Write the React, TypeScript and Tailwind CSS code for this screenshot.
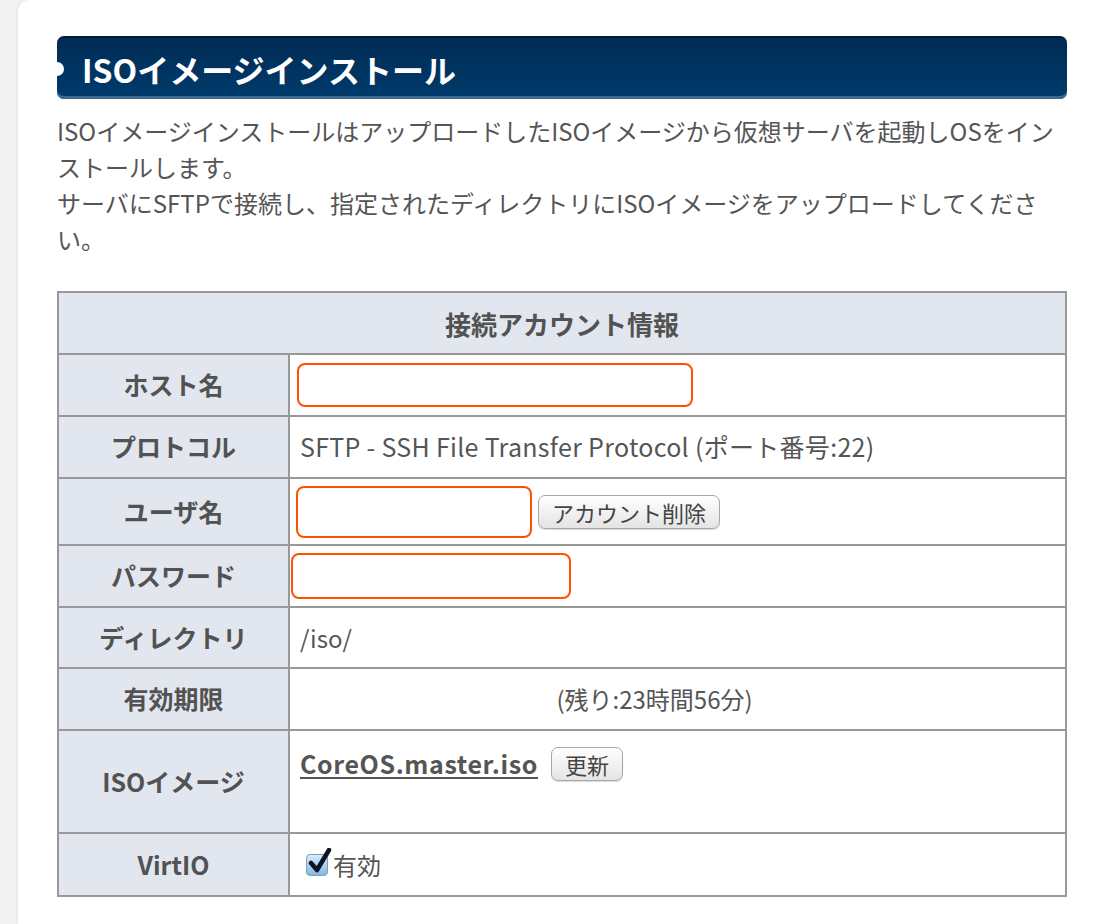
import { useState } from 'react';

const font = { fontFamily: '"Noto Sans CJK JP", "Noto Sans", sans-serif' };

function Label({ children }: { children: React.ReactNode }) {
  return (
    <td className="w-[231px] border-2 border-[#999] bg-[#e2e7ef] text-center align-middle text-[25px] font-bold text-[#525252]">
      {children}
    </td>
  );
}

function MacButton({ children }: { children: React.ReactNode }) {
  return (
    <button className="h-[34px] rounded-[7px] border border-[#a8a8a8] bg-gradient-to-b from-white to-[#e4e4e4] px-[13px] text-[22px] leading-none text-[#444] shadow-[0_1px_1px_rgba(0,0,0,0.15)]">
      {children}
    </button>
  );
}

export default function App() {
  const [host, setHost] = useState('');
  const [user, setUser] = useState('');
  const [pass, setPass] = useState('');
  const [virtio, setVirtio] = useState(true);

  return (
    <div className="min-h-[924px] bg-[#f3f3f3] pl-[18px]" style={font}>
      <div className="min-h-[924px] rounded-tl-[10px] bg-white pl-[39px] pr-[30px] pt-[36px] shadow-[0_0_4px_rgba(0,0,0,0.12)]">
        {/* Title bar */}
        <div className="relative flex h-[63px] w-[1010px] items-center rounded-[7px] border-t-2 border-[#001d38] bg-gradient-to-b from-[#002c55] to-[#003b6c] pl-[25px] shadow-[inset_0_-3px_0_#3d6a8e]">
          <span className="absolute left-[-7px] top-1/2 h-[14px] w-[14px] -translate-y-1/2 rounded-full bg-white" />
          <h1 className="text-[32px] font-bold leading-none text-white">ISOイメージインストール</h1>
        </div>

        {/* Description */}
        <p className="mt-[14px] whitespace-nowrap text-[24px] leading-[36px] text-[#555]">
          ISOイメージインストールはアップロードしたISOイメージから仮想サーバを起動しOSをイン
          <br />
          ストールします。
          <br />
          サーバにSFTPで接続し、指定されたディレクトリにISOイメージをアップロードしてくださ
          <br />
          い。
        </p>

        {/* Account table */}
        <table className="mt-[34px] w-[1010px] border-collapse border-2 border-[#999] text-[24px] text-[#555]">
          <tbody>
            <tr className="h-[62px]">
              <th colSpan={2} className="border-2 border-[#999] bg-[#e2e7ef] text-center text-[26px] font-bold text-[#525252]">
                接続アカウント情報
              </th>
            </tr>
            <tr className="h-[62px]">
              <Label>ホスト名</Label>
              <td className="border-2 border-[#999] px-[7px]">
                <input
                  value={host}
                  onChange={e => setHost(e.target.value)}
                  className="block h-[44px] w-[396px] rounded-[8px] border-2 border-[#ff5200] px-2 outline-none"
                />
              </td>
            </tr>
            <tr className="h-[62px]">
              <Label>プロトコル</Label>
              <td className="border-2 border-[#999] px-[10px] text-[25px] tracking-[0.3px]">SFTP - SSH File Transfer Protocol (ポート番号:22)</td>
            </tr>
            <tr className="h-[67px]">
              <Label>ユーザ名</Label>
              <td className="border-2 border-[#999] px-[6px]">
                <div className="flex items-center gap-[6px]">
                  <input
                    value={user}
                    onChange={e => setUser(e.target.value)}
                    className="block h-[52px] w-[236px] rounded-[8px] border-2 border-[#ff5200] px-2 outline-none"
                  />
                  <MacButton>アカウント削除</MacButton>
                </div>
              </td>
            </tr>
            <tr className="h-[62px]">
              <Label>パスワード</Label>
              <td className="border-2 border-[#999] pl-[1px]">
                <input
                  type="password"
                  value={pass}
                  onChange={e => setPass(e.target.value)}
                  className="block h-[46px] w-[280px] rounded-[8px] border-2 border-[#ff5200] px-2 outline-none"
                />
              </td>
            </tr>
            <tr className="h-[61px]">
              <Label>ディレクトリ</Label>
              <td className="border-2 border-[#999] px-[10px]">/iso/</td>
            </tr>
            <tr className="h-[62px]">
              <Label>有効期限</Label>
              <td className="border-2 border-[#999] pr-[46px] text-center">(残り:23時間56分)</td>
            </tr>
            <tr className="h-[103px]">
              <Label>ISOイメージ</Label>
              <td className="border-2 border-[#999] px-[10px] pt-[14px] align-top">
                <div className="flex items-center gap-[13px]">
                  <a href="#" className="text-[25px] font-bold tracking-[0.6px] text-[#555] underline underline-offset-[3px]">
                    CoreOS.master.iso
                  </a>
                  <MacButton>更新</MacButton>
                </div>
              </td>
            </tr>
            <tr className="h-[63px]">
              <Label>VirtIO</Label>
              <td className="border-2 border-[#999] px-[16px]">
                <label className="flex cursor-pointer items-center gap-[5px]">
                  <span
                    onClick={() => setVirtio(!virtio)}
                    className="relative inline-block h-[22px] w-[22px] rounded-[4px] border border-[#8a9bb0] bg-gradient-to-b from-[#d8ecfb] to-[#7fb8ea]"
                  >
                    {virtio && (
                      <svg viewBox="0 0 24 24" className="absolute left-[1px] top-[-7px] h-[26px] w-[24px]">
                        <path d="M3 14 L9 21 L21 1" fill="none" stroke="#0b1522" strokeWidth="4.5" strokeLinecap="round" strokeLinejoin="round" />
                      </svg>
                    )}
                  </span>
                  <span>有効</span>
                </label>
              </td>
            </tr>
          </tbody>
        </table>
      </div>
    </div>
  );
}
